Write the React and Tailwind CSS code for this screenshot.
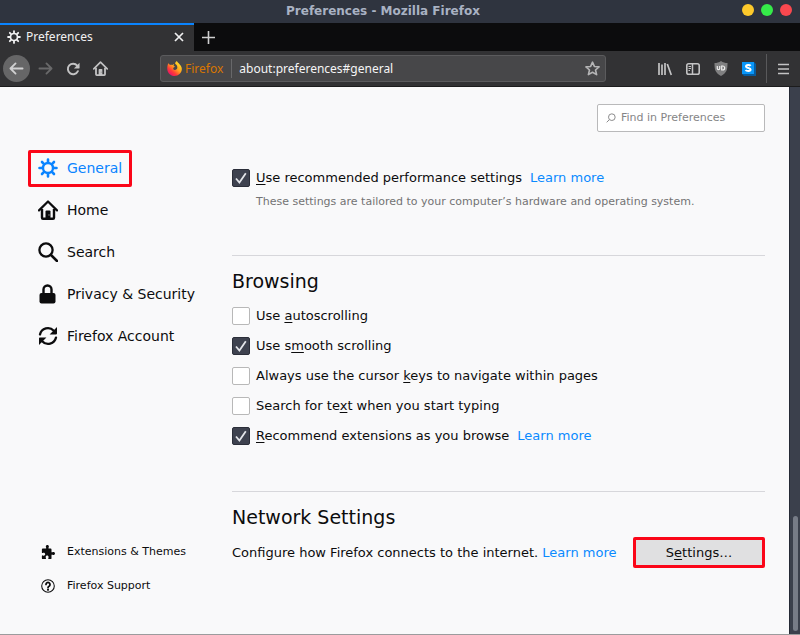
import React from "react";

const Gear = ({ className }) => (
  <svg viewBox="0 0 20 20" className={className} fill="none" stroke="currentColor" aria-hidden="true">
    <circle cx="10" cy="10" r="5" strokeWidth="2.4" />
    <g strokeWidth="2.6" strokeLinecap="round">
      <path d="M10 4V1.5M10 16v2.5M4 10H1.5M16 10h2.5" />
      <path d="M5.800 5.800 4 4M14.200 5.800 16 4M5.800 14.200 4 16M14.200 14.200 16 16" />
    </g>
  </svg>
);

const House = ({ className }) => (
  <svg viewBox="0 0 20 20" className={className} fill="none" stroke="currentColor" aria-hidden="true">
    <path d="M1 10.400 10 1.500l9 8.900" strokeWidth="2.200" strokeLinecap="round" strokeLinejoin="round" />
    <path d="M4 9v8.800a1 1 0 0 0 1 1h10a1 1 0 0 0 1-1V9" strokeWidth="2.400" />
    <path d="M7.500 19v-7.500a1 1 0 0 1 1-1h3a1 1 0 0 1 1 1V19z" fill="currentColor" stroke="none" />
    <path d="M11 14.200v1.600" stroke="#8a8a8a" strokeWidth="1" />
  </svg>
);

const Magnifier = ({ className }) => (
  <svg viewBox="0 0 20 20" className={className} fill="none" stroke="currentColor" strokeLinecap="round" aria-hidden="true">
    <circle cx="8" cy="8" r="6.600" strokeWidth="2.300" />
    <path d="m13 13 6 6" strokeWidth="2.500" />
  </svg>
);

const Lock = ({ className }) => (
  <svg viewBox="0 0 20 20" className={className} aria-hidden="true">
    <path d="M5.500 10V5.500a4 4 0 0 1 8 0V10" fill="none" stroke="currentColor" strokeWidth="2.400" />
    <rect x="1.500" y="9" width="16" height="10.500" rx="2" fill="currentColor" />
  </svg>
);

const Sync = ({ className }) => (
  <svg viewBox="0 0 20 20" className={className} fill="none" stroke="currentColor" strokeWidth="2.300" aria-hidden="true">
    <path d="M2 8.400A8 8 0 0 1 15.800 4.800" strokeLinecap="round" />
    <path d="M18 11.600A8 8 0 0 1 4.200 15.200" strokeLinecap="round" />
    <path d="M19 1v6.600a.8.8 0 0 1-.8.8H11.600z" fill="currentColor" stroke="none" />
    <path d="M1 19v-6.600a.8.8 0 0 1 .8-.8h6.600z" fill="currentColor" stroke="none" />
  </svg>
);

const Puzzle = ({ className }) => (
  <svg viewBox="0 0 16 16" className={className} fill="currentColor" aria-hidden="true">
    <path d="M2 4h3.300c.6 0 .9-.5.600-1-.3-.4-.4-.8-.4-1.200C5.500.800 6.300 0 7.300 0S9 .800 9 1.800c0 .4-.1.800-.4 1.200-.3.500 0 1 .6 1H11c.6 0 1 .4 1 1v2.800c0 .6.500.9 1 .6.400-.3.800-.4 1.200-.4 1 0 1.800.800 1.800 1.800s-.8 1.700-1.800 1.700c-.4 0-.8-.1-1.200-.4-.5-.3-1 0-1 .6V15c0 .6-.4 1-1 1H9c-.6 0-.9-.5-.7-1 .2-.4.400-.8.400-1.200 0-1-.8-1.700-1.700-1.700s-1.700.700-1.700 1.700c0 .4.200.800.400 1.200.2.500-.1 1-.7 1H2c-.6 0-1-.4-1-1v-2.500c0-.6.500-.8 1-.6.400.2.700.3 1.100.3 1 0 1.700-.8 1.700-1.700S4.100 8.800 3.100 8.800c-.4 0-.7.100-1.100.300-.5.200-1 0-1-.6V5c0-.6.400-1 1-1z" />
  </svg>
);

const Help = ({ className }) => (
  <svg viewBox="0 0 16 16" className={className} fill="none" stroke="currentColor" aria-hidden="true">
    <circle cx="8" cy="8" r="7.200" strokeWidth="1.200" />
    <path d="M5.700 6.200a2.300 2.300 0 1 1 3.500 2C8.300 8.700 8 9 8 9.900" strokeWidth="2" strokeLinecap="round" />
    <circle cx="8" cy="12.400" r="1.200" fill="currentColor" stroke="none" />
  </svg>
);

const FirefoxLogo = () => (
  <svg viewBox="0 0 16 16" className="h-[15px] w-[15px] shrink-0" aria-hidden="true">
    <defs>
      <linearGradient id="flame" x1="0.85" y1="0.1" x2="0.2" y2="0.9">
        <stop offset="0" stopColor="#ffe226" />
        <stop offset="0.45" stopColor="#ffa01f" />
        <stop offset="0.75" stopColor="#ff3b37" />
        <stop offset="1" stopColor="#e91567" />
      </linearGradient>
    </defs>
    <path d="M1.500 2.500 3.200 4.200C4 3.900 5 4 5.600 4.200L7.600 3.200 7 5.200l1.700.6-1.900 1.500c-.5 1 .2 2.200 1.400 2.300 1.500.1 2.700-1 2.800-2.400C11.200 5 10 3.600 8.600 2.800 8.800 1.600 9.600.600 10.600 0c.4 1.600 2 2.200 3 3.600 1.300 1.300 2.400 3.300 2.200 5.300C15.500 13 12.200 16 8.100 16 3.800 16 .400 12.700.300 8.500.200 6.300.500 4.200 1.500 2.500z" fill="url(#flame)" />
  </svg>
);

const NAV = [
  ["General", Gear],
  ["Home", House],
  ["Search", Magnifier],
  ["Privacy & Security", Lock],
  ["Firefox Account", Sync],
];

function Check({ id, checked, children }) {
  return (
    <div className="flex h-[30px] items-center gap-[6px] text-[13px]">
      <span className="grid h-[18px] w-[18px] shrink-0 place-items-center">
        <input
          id={id}
          type="checkbox"
          defaultChecked={checked}
          className="peer col-start-1 row-start-1 h-[18px] w-[18px] appearance-none rounded-[2px] border border-[#b8b8b8] bg-white checked:border-[#2b2e39] checked:bg-[#3e424f]"
        />
        <svg viewBox="0 0 18 18" className="pointer-events-none col-start-1 row-start-1 hidden h-[18px] w-[18px] peer-checked:block" fill="none" stroke="#e4e6ea" strokeWidth="1.800" aria-hidden="true">
          <path d="m4 9.500 3.400 4L13.800 4.200" />
        </svg>
      </span>
      {children}
    </div>
  );
}

const Key = ({ children }) => <span className="underline underline-offset-2">{children}</span>;

const Learn = () => (
  <a href="#learn" className="text-[#0a8aff]">Learn more</a>
);

export default function App() {
  return (
    <div className="flex h-screen flex-col overflow-hidden bg-[#f9f9fa] font-['DejaVu_Sans',sans-serif] text-[#0c0c0d]">
      <header className="flex h-[23px] shrink-0 items-center bg-[#2f343f] pr-2">
        <div className="w-6" />
        <h1 className="flex-1 pb-[2px] text-center text-[12px] font-bold text-[#a9b2c3]">Preferences - Mozilla Firefox</h1>
        <div className="flex gap-[7px] pb-1">
          <button aria-label="Minimize" className="h-3 w-3 rounded-full bg-[#fdc92b]" />
          <button aria-label="Maximize" className="h-3 w-3 rounded-full bg-[#35eb49]" />
          <button aria-label="Close window" className="h-3 w-3 rounded-full bg-[#f9484f]" />
        </div>
      </header>

      <div className="flex h-7 shrink-0 bg-[#0c0c0d] font-['Noto_Sans',sans-serif] text-[12px] text-[#f0f0f1]">
        <div className="flex w-[194px] items-center border-t-2 border-[#0a84ff] bg-[#323234] pr-[9px] pb-[2px] pl-[7px]">
          <Gear className="h-[14px] w-[14px]" />
          <span className="flex-1 pl-[5px]">Preferences</span>
          <button aria-label="Close tab">
            <svg viewBox="0 0 12 12" className="h-3 w-3" stroke="currentColor" strokeWidth="1.700" aria-hidden="true"><path d="m2 2 8 8M10 2l-8 8" /></svg>
          </button>
        </div>
        <button aria-label="New tab" className="px-2">
          <svg viewBox="0 0 13 13" className="h-[13px] w-[13px]" stroke="#cfcfd0" strokeWidth="1.600" aria-hidden="true"><path d="M6.500 0v13M0 6.500h13" /></svg>
        </button>
      </div>

      <div className="flex h-9 shrink-0 items-center border-b border-[#1c1c1d] bg-[#323234] pr-[11px] pl-[3px] font-['Noto_Sans',sans-serif] text-[12px] text-[#c3c3c4]">
        <button aria-label="Back" className="grid h-[27px] w-[27px] place-items-center rounded-full bg-[#666667]">
          <svg viewBox="0 0 16 16" className="h-[15px] w-[15px]" fill="none" stroke="#d0d0d1" strokeWidth="1.900" strokeLinecap="round" strokeLinejoin="round" aria-hidden="true"><path d="M14.500 8h-13M7 2.500 1.500 8 7 13.500" /></svg>
        </button>
        <button aria-label="Forward" className="ml-2">
          <svg viewBox="0 0 16 16" className="h-[15px] w-[15px]" fill="none" stroke="#69696a" strokeWidth="1.900" strokeLinecap="round" strokeLinejoin="round" aria-hidden="true"><path d="M1.500 8h13M9 2.500 14.500 8 9 13.500" /></svg>
        </button>
        <button aria-label="Reload" className="ml-[13px]">
          <svg viewBox="0 0 16 16" className="h-[14px] w-[14px]" fill="none" stroke="currentColor" strokeWidth="2.200" strokeLinecap="round" aria-hidden="true">
            <path d="M12.800 4.200A6 6 0 1 0 13.600 10.500" />
            <path d="M15.500.800v6a.5.500 0 0 1-.5.500H9z" fill="currentColor" stroke="none" />
          </svg>
        </button>
        <button aria-label="Home page" className="ml-[13px]"><House className="h-[15px] w-[15px]" /></button>
        <div className="ml-[52px] flex h-[27px] flex-1 items-center rounded-[3px] border border-[#5b5b5d] bg-[#474749] pr-[5px] pl-[6px]">
          <FirefoxLogo />
          <span className="mr-2 ml-[3px] text-[#d97600]">Firefox</span>
          <span className="h-[19px] w-px bg-[#68686a]" />
          <input aria-label="Address" defaultValue="about:preferences#general" className="min-w-0 flex-1 bg-transparent pl-[7px] text-[#f5f5f6] outline-none" />
          <button aria-label="Bookmark this page">
            <svg viewBox="0 0 16 16" className="h-[15px] w-[15px]" fill="none" stroke="#b5b5b6" strokeWidth="1.700" strokeLinejoin="round" aria-hidden="true"><path d="m8 1.200 2 4.600 5 .5-3.800 3.300 1.200 5L8 12l-4.400 2.600 1.200-5L1 6.300l5-.5z" /></svg>
          </button>
        </div>
        <button aria-label="Library" className="ml-[52px]">
          <svg viewBox="0 0 14 14" className="h-[14px] w-[14px]" stroke="currentColor" strokeWidth="1.700" aria-hidden="true"><path d="M1 1v12M4 2.500V13M7 1v12M9.300 2l4 11" /></svg>
        </button>
        <button aria-label="Sidebars" className="ml-[14px]">
          <svg viewBox="0 0 14 12" className="h-3 w-[14px]" fill="none" stroke="currentColor" aria-hidden="true"><rect x=".8" y=".8" width="12.400" height="10.400" rx="1.800" strokeWidth="1.600" /><path d="M6.500 1v10" strokeWidth="1.500" /><path d="M2.500 3.500h2.500M2.500 5.500h2.500M2.500 7.500H4" /></svg>
        </button>
        <button aria-label="uBlock" className="ml-[14px]">
          <svg viewBox="0 0 14 15" className="h-[15px] w-[14px]" fill="none" aria-hidden="true"><path d="M7 0c2 1.500 4 2 6.500 2 0 6.500-.5 9.500-6.500 13C1 11.500.500 8.500.500 2 3 2 5 1.500 7 0z" fill="#808081" /><path d="M3.300 5v2.500a1.200 1.200 0 0 0 2.400 0V5M7.700 5v4h1a2 2 0 0 0 0-4z" stroke="#eee" strokeWidth="1.200" /></svg>
        </button>
        <button aria-label="Extension" className="ml-[14px]">
          <svg viewBox="0 0 14 14" className="h-[14px] w-[14px]" fill="none" aria-hidden="true"><path d="M12 0l2 2v12H2l-2-2z" fill="#075a9c" /><path d="M0 0h12v12H0z" fill="#0996f8" /><path d="M8.600 3.900C7.800 2.700 4 2.600 4 4.400c0 2 4.600 1 4.600 3.100C8.600 9.400 4.500 9.300 3.600 8" stroke="#fff" strokeWidth="2" /></svg>
        </button>
        <span className="mr-[11px] ml-[10px] h-[29px] w-px bg-[#59595b]" />
        <button aria-label="Menu">
          <svg viewBox="0 0 11 12" className="h-3 w-[11px]" stroke="currentColor" strokeWidth="1.700" aria-hidden="true"><path d="M0 1.500h11M0 6h11M0 10.500h11" /></svg>
        </button>
      </div>

      <div className="flex min-h-0 flex-1 border-b border-[#9c9c9d]">
        <nav className="flex w-[232px] shrink-0 flex-col justify-between pt-[60px] pb-[31px] pl-[28px]">
          <ul className="text-[14px]">
            {NAV.map(([name, Icon], i) => (
              <li key={name} className="flex h-[42px] items-center">
                <a
                  href={"#" + name}
                  className={
                    i === 0
                      ? "flex h-[37px] items-center gap-[9px] rounded-[2px] border-3 border-[#fb0618] px-[7px] text-[#0a84ff]"
                      : "flex h-[37px] items-center gap-[9px] pl-[10px]"
                  }
                >
                  <Icon className="h-5 w-5" />
                  {name}
                </a>
              </li>
            ))}
          </ul>
          <ul className="text-[11px]">
            <li className="flex h-[34px] items-center"><a href="#extensions" className="flex items-center gap-3 pl-[13px]"><Puzzle className="h-[14px] w-[14px]" />Extensions &amp; Themes</a></li>
            <li className="flex h-[34px] items-center"><a href="#support" className="flex items-center gap-3 pl-[13px]"><Help className="h-[14px] w-[14px]" />Firefox Support</a></li>
          </ul>
        </nav>

        <main className="min-w-0 flex-1 pt-[17px] pr-6">
          <label className="ml-auto flex h-7 w-[168px] items-center gap-[5px] rounded-[2px] border border-[#b9b9ba] bg-white px-2">
            <svg viewBox="0 0 12 12" className="h-[10px] w-[10px] shrink-0" fill="none" stroke="#8b8b8c" strokeWidth="1.200" aria-hidden="true"><circle cx="7" cy="5" r="4" /><path d="M4 8 .800 11.200" /></svg>
            <input type="search" aria-label="Find in Preferences" placeholder="Find in Preferences" className="min-w-0 flex-1 bg-transparent text-[11px] outline-none placeholder:text-[#858586]" />
          </label>

          <section className="mt-[31px]">
            <Check id="perf" checked>
              <label htmlFor="perf"><Key>U</Key>se recommended performance settings</label>
              <span className="pl-[2px]"><Learn /></span>
            </Check>
            <p className="pl-6 text-[11px] leading-[18px] text-[#737374]">These settings are tailored to your computer’s hardware and operating system.</p>
          </section>

          <section className="mt-11 border-t border-[#d7d7db] pt-[11px]">
            <h2 className="mb-[6px] text-[19px] leading-7">Browsing</h2>
            <Check id="auto"><label htmlFor="auto">Use <Key>a</Key>utoscrolling</label></Check>
            <Check id="smooth" checked><label htmlFor="smooth">Use s<Key>m</Key>ooth scrolling</label></Check>
            <Check id="cursor"><label htmlFor="cursor">Always use the cursor <Key>k</Key>eys to navigate within pages</label></Check>
            <Check id="typing"><label htmlFor="typing">Search for te<Key>x</Key>t when you start typing</label></Check>
            <Check id="recommend" checked>
              <label htmlFor="recommend"><Key>R</Key>ecommend extensions as you browse</label>
              <span className="pl-[2px]"><Learn /></span>
            </Check>
          </section>

          <section className="mt-10 border-t border-[#d7d7db] pt-[11px]">
            <h2 className="mb-[6px] text-[19px] leading-7">Network Settings</h2>
            <div className="flex items-center justify-between text-[13px]">
              <p>Configure how Firefox connects to the internet. <Learn /></p>
              <button className="h-[31px] w-[132px] rounded-[2px] border-3 border-[#fb0618] bg-[#e0e0e1]">S<Key>e</Key>ttings…</button>
            </div>
          </section>
        </main>

        <div className="flex w-[11px] shrink-0 items-end justify-center border-l border-[#252a35] bg-[#3b404c] pb-[3px]">
          <div className="h-[115px] w-[5px] rounded-full bg-[#777c87]" />
        </div>
      </div>
    </div>
  );
}
